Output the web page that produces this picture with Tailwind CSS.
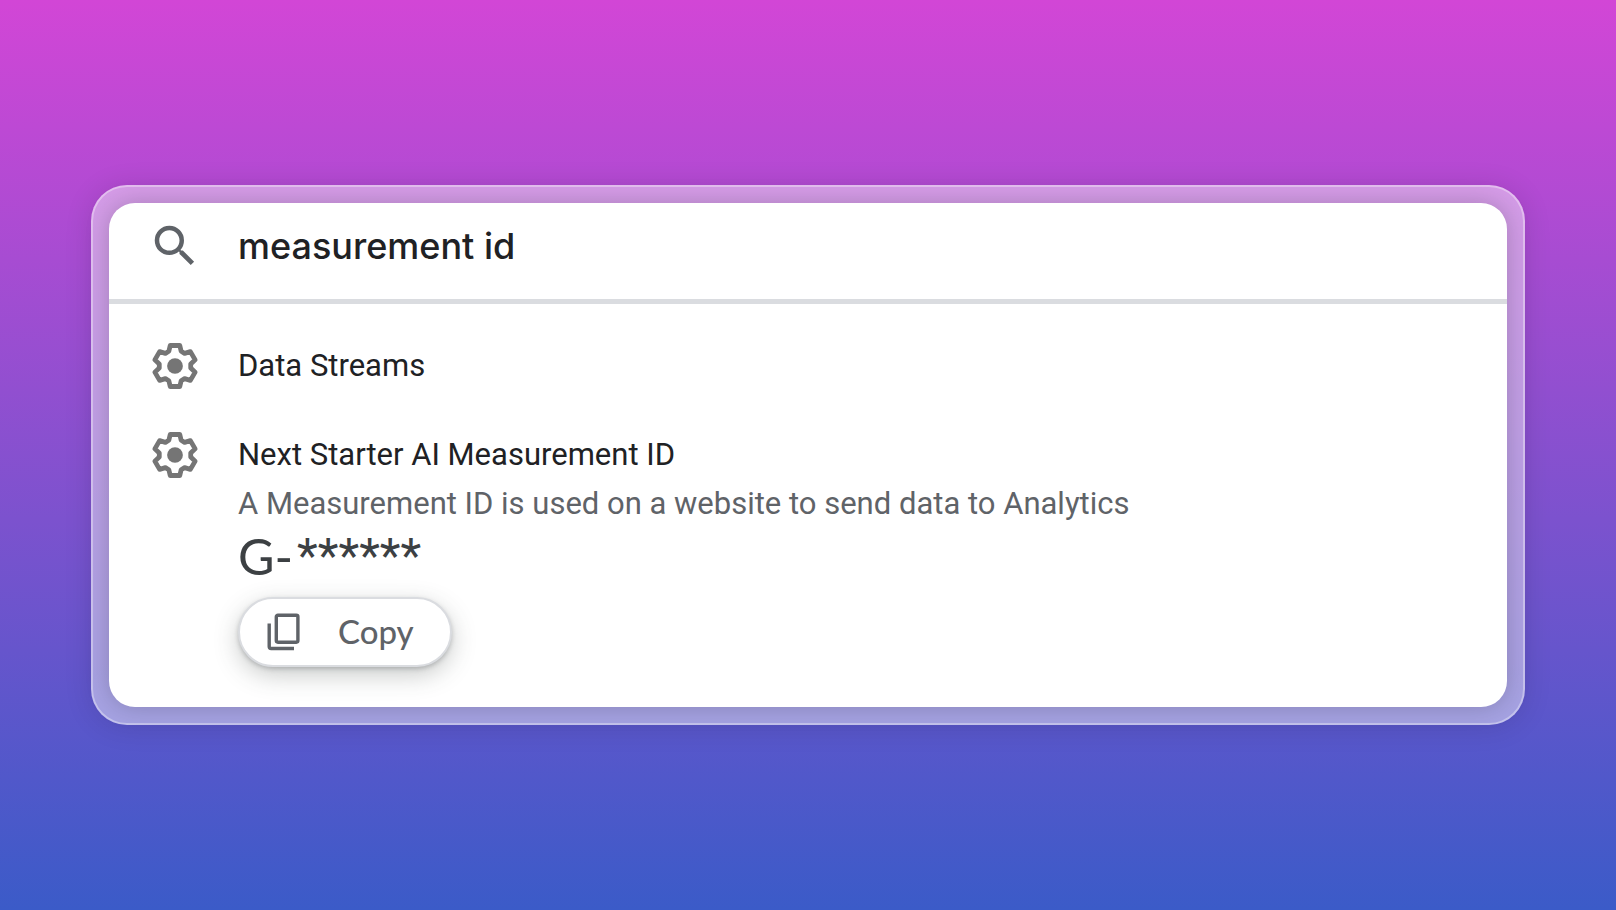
<!DOCTYPE html>
<html lang="en">
<head>
<meta charset="utf-8">
<meta name="viewport" content="width=device-width, initial-scale=1">
<title>Measurement ID search</title>
<script src="https://cdn.jsdelivr.net/npm/@tailwindcss/browser@4"></script>
</head>
<body class="flex min-h-screen items-center bg-linear-to-b/srgb from-[#d246d6] to-[#3b5bc8] px-[91px] font-['Roboto',sans-serif]">
<svg class="hidden" aria-hidden="true">
  <symbol id="gear" viewBox="-79 -79 158 158">
    <path fill="none" stroke="#757575" stroke-width="14" stroke-linejoin="round" d="M-14-60H14L18-43 28-37 45-42 59-18 46-6V6L59 18 45 42 28 37 18 43 14 60H-14L-18 43-28 37-45 42-59 18-46 6V-6L-59-18-45-42-28-37-18-43Z"/>
    <circle r="23" fill="#757575"/>
  </symbol>
</svg>
<main class="w-full rounded-[36px] border-2 border-white/35 bg-white/45 p-4 shadow-[0_2px_28px_rgba(0,0,0,0.12)]">
  <div class="rounded-[26px] bg-white pb-10 shadow-[0_0_24px_rgba(0,0,0,0.2)]">
    <label class="flex h-[101px] items-start gap-9 border-b-5 border-[#dadce0] px-[39px] pt-4">
      <svg class="size-[54px] shrink-0" viewBox="0 0 24 24" fill="#5f6368" aria-hidden="true"><path d="M15.5 14h-.79l-.28-.27A6.47 6.47 0 0 0 16 9.5 6.5 6.5 0 1 0 9.5 16c1.61 0 3.09-.59 4.23-1.57l.27.28v.79l5 4.99L20.49 19l-4.99-5zm-6 0C7.01 14 5 11.99 5 9.5S7.01 5 9.5 5 14 7.01 14 9.5 11.99 14 9.5 14z"/></svg>
      <input type="text" value="measurement id" aria-label="Search" class="h-[54px] min-w-0 flex-1 font-['Inter',sans-serif] text-[36px] font-medium text-[#202124] outline-none">
    </label>
    <ul class="flex flex-col gap-[35px] px-[39px] pt-[35px]">
      <li class="flex gap-9">
        <svg class="size-[54px] shrink-0" aria-hidden="true"><use href="#gear"/></svg>
        <a href="#" class="text-[31px] leading-[54px] text-[#202124]">Data Streams</a>
      </li>
      <li class="flex gap-9">
        <svg class="size-[54px] shrink-0" aria-hidden="true"><use href="#gear"/></svg>
        <div class="flex min-w-0 flex-1 flex-col items-start">
          <a href="#" class="text-[31px] leading-[54px] text-[#202124]">Next Starter AI Measurement ID</a>
          <p class="text-[31px] leading-[44px] text-[#5f6368]">A Measurement ID is used on a website to send data to Analytics</p>
          <p class="flex h-[60px] items-center gap-1 leading-[60px] text-[#3c4043]"><span class="font-['Lato',sans-serif] text-[50px]">G-</span><span class="text-[48px]">******</span></p>
          <button type="button" class="mt-[11px] flex h-[70px] items-center gap-[34px] rounded-full border-2 border-[#dadce0] bg-white pr-9 pl-6 font-['Lato',sans-serif] text-[33px] font-medium text-[#5f6368] shadow-[0_2px_4px_rgba(60,64,67,0.25),0_8px_24px_rgba(60,67,64,0.28)]">
            <svg class="size-[40px]" viewBox="0 0 40 40" fill="none" stroke="#5f6368" stroke-width="3.4" aria-hidden="true"><rect x="12.3" y="3.2" width="21.6" height="27" rx="1.6"/><path d="M5.2 11.5V34.5a2 2 0 0 0 2 2H30"/></svg>
            Copy
          </button>
        </div>
      </li>
    </ul>
  </div>
</main>
</body>
</html>
